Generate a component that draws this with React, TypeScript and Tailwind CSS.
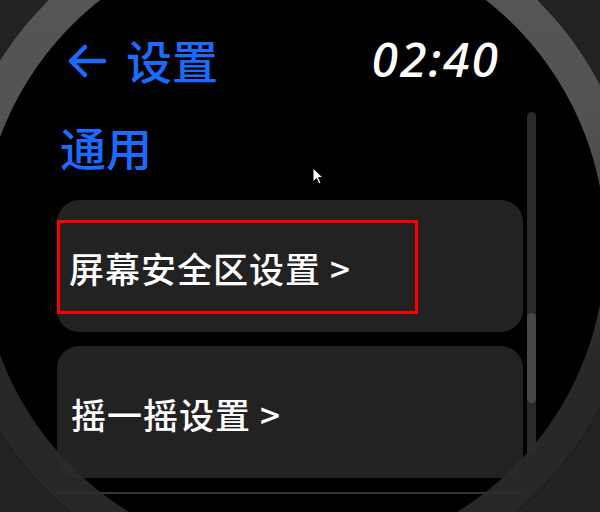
import React from 'react'

const CJK = "font-['Noto_Sans_CJK_SC','Noto_Sans',sans-serif]"

function BackArrow() {
  return (
    <svg width="40" height="36" viewBox="0 0 40 36" fill="none" className="mt-[4px] shrink-0">
      <path d="M37 18 H5 M18 4 L4 18 L18 32" stroke="#1a6cff" strokeWidth="4.5" strokeLinecap="round" strokeLinejoin="round" />
    </svg>
  )
}

function Cursor() {
  return (
    <svg width="12" height="18" viewBox="0 0 12 18" className="absolute left-[312px] top-[167px]">
      <path d="M1 1 L1 15 L4.5 11.5 L7 17 L9 16 L6.6 10.6 L11 10.6 Z" fill="#fff" stroke="#000" strokeWidth="1" strokeLinejoin="round" />
    </svg>
  )
}

function SettingCard({ label, pl }: { label: string; pl: string }) {
  return (
    <div className={`h-[132px] rounded-[22px] bg-[#222222] flex items-center pt-[3px] ${pl}`}>
      <span className={`${CJK} text-[35px] leading-none font-medium tracking-[1px] text-white`}>{label}</span>
    </div>
  )
}

export default function App() {
  return (
    <div className="relative w-[600px] h-[512px] overflow-hidden bg-black">
      {/* header */}
      <header className="flex items-center justify-between pl-[67px] pr-[100px] pt-[35px] h-[83px]">
        <div className="flex items-center gap-[19px]">
          <BackArrow />
          <span className={`${CJK} text-[46px] leading-none font-medium text-[#1a6cff]`}>设置</span>
        </div>
        <span className="font-['Noto_Sans',sans-serif] italic font-medium text-[48px] leading-none tracking-[2px] text-white">
          02:40
        </span>
      </header>

      {/* list + scrollbar */}
      <div className="flex ml-[57px] mt-[29px] gap-[4px]">
        <div className="w-[466px] flex flex-col">
          <h2 className={`${CJK} pl-[3px] mt-[11px] text-[46px] leading-none font-medium text-[#1a6cff]`}>通用</h2>
          <div className="mt-[31px]">
            <SettingCard label="屏幕安全区设置 >" pl="pl-[12px]" />
          </div>
          <div className="mt-[14px]">
            <SettingCard label="摇一摇设置 >" pl="pl-[14px]" />
          </div>
          <div className="mt-[14px] h-[2px] bg-[#333333]" />
        </div>
        <div className="w-[9px] h-[343px] rounded-full bg-[#2a2a2a] flex flex-col pt-[201px]">
          <div className="h-[90px] rounded-full bg-[#474747]" />
        </div>
      </div>

      {/* annotation box */}
      <div className="absolute left-[57px] top-[220px] w-[361px] h-[94px] border-[3px] border-[#ff0000]" />

      <Cursor />

      {/* watch bezel overlay */}
      <div className="pointer-events-none absolute left-[-54px] top-[-101px] w-[694px] h-[694px] rounded-full shadow-[0_0_0_400px_#222222]" />
      <div className="pointer-events-none absolute left-[-54px] top-[-101px] w-[694px] h-[694px] rounded-full bg-[linear-gradient(to_bottom,#585858_0%,#525252_33%,#3c3c3c_52%,rgba(44,44,44,0.9)_66%,rgba(44,44,44,0.9)_100%)] [mask-image:radial-gradient(circle_at_center,transparent_312px,#000_313px)]" />
    </div>
  )
}
